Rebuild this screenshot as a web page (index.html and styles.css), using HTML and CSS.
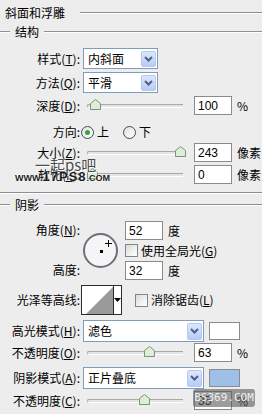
FILE: index.html
```html
<!DOCTYPE html>
<html lang="zh">
<head>
    <meta charset="UTF-8">
    <title>斜面和浮雕</title>
    <link rel="stylesheet" href="styles.css">
</head>
<body>
    <div class="title"><span>斜面和浮雕</span><i class="rule"></i></div>
    <div class="legend"><i class="rule stub"></i><span>结构</span><i class="rule"></i></div>

    <div class="row h21 mt10">
        <label class="lbl">样式(<u>T</u>):</label>
        <div class="select w75"><span>内斜面</span><b class="drop"><svg width="9" height="6" viewBox="0 0 9 6"><path d="M1 1 L4.5 4.5 L8 1" fill="none" stroke="#4d6185" stroke-width="2"/></svg></b></div>
    </div>
    <div class="row h21 mt3">
        <label class="lbl">方法(<u>Q</u>):</label>
        <div class="select w75"><span>平滑</span><b class="drop"><svg width="9" height="6" viewBox="0 0 9 6"><path d="M1 1 L4.5 4.5 L8 1" fill="none" stroke="#4d6185" stroke-width="2"/></svg></b></div>
    </div>
    <div class="row h19 mt3">
        <label class="lbl">深度(<u>D</u>):</label>
        <div class="slider"><i class="track"></i><svg class="thumb" style="left:7px" width="11" height="11" viewBox="0 0 11 11"><path d="M0.5 4.5 L5.5 0.5 L10.5 4.5 V10.5 H0.5 Z" fill="#dcefd6" stroke="#7d917b"/></svg></div>
        <div class="num">100</div><span class="unit">%</span>
    </div>
    <div class="row h16 mt9">
        <label class="lbl">方向:</label>
        <i class="radio on"></i><span class="opt">上</span>
        <i class="radio gap"></i><span class="opt">下</span>
    </div>
    <div class="row h19 mt3">
        <label class="lbl">大小(<u>Z</u>):</label>
        <div class="slider"><i class="track"></i><svg class="thumb" style="left:92px" width="11" height="11" viewBox="0 0 11 11"><path d="M0.5 4.5 L5.5 0.5 L10.5 4.5 V10.5 H0.5 Z" fill="#dcefd6" stroke="#7d917b"/></svg></div>
        <div class="num">243</div><span class="unit">像素</span>
    </div>
    <div class="row h19 mt3">
        <label class="lbl">软化(<u>F</u>):</label>
        <div class="slider"><i class="track"></i><svg class="thumb" style="left:4px" width="11" height="11" viewBox="0 0 11 11"><path d="M0.5 4.5 L5.5 0.5 L10.5 4.5 V10.5 H0.5 Z" fill="#dcefd6" stroke="#7d917b"/></svg></div>
        <div class="num">0</div><span class="unit">像素</span>
    </div>

    <div class="sep"></div>
    <div class="legend mt5"><i class="rule stub"></i><span>阴影</span><i class="rule"></i></div>

    <div class="angle mt10">
        <div class="angle-labels">
            <label class="lbl">角度(<u>N</u>):</label>
            <label class="lbl">高度:</label>
        </div>
        <div class="dial"><i class="dot"></i><i class="cross"></i></div>
        <div class="angle-ctrls">
            <div class="row h19"><div class="num">52</div><span class="unit">度</span></div>
            <div class="row h13"><i class="check"></i><span class="opt">使用全局光(<u>G</u>)</span></div>
            <div class="row h19"><div class="num">32</div><span class="unit">度</span></div>
        </div>
    </div>

    <div class="row h30 mt5">
        <label class="lbl">光泽等高线:</label>
        <div class="contour">
            <svg width="31" height="28" viewBox="0 0 31 28"><path d="M4 28 L31 1 V28 Z" fill="#9a9a9a"/></svg>
            <b class="contour-drop"><svg width="7" height="4" viewBox="0 0 7 4"><path d="M0 0 H7 L3.5 4 Z" fill="#000"/></svg></b>
        </div>
        <i class="check ml13"></i><span class="opt">消除锯齿(<u>L</u>)</span>
    </div>

    <div class="row h22 mt5">
        <label class="lbl">高光模式(<u>H</u>):</label>
        <div class="select w121"><span>滤色</span><b class="drop"><svg width="9" height="6" viewBox="0 0 9 6"><path d="M1 1 L4.5 4.5 L8 1" fill="none" stroke="#4d6185" stroke-width="2"/></svg></b></div>
        <i class="swatch white"></i>
    </div>
    <div class="row h19 mt1">
        <label class="lbl">不透明度(<u>O</u>):</label>
        <div class="slider"><i class="track"></i><svg class="thumb" style="left:61px" width="11" height="11" viewBox="0 0 11 11"><path d="M0.5 4.5 L5.5 0.5 L10.5 4.5 V10.5 H0.5 Z" fill="#dcefd6" stroke="#7d917b"/></svg></div>
        <div class="num">63</div><span class="unit">%</span>
    </div>
    <div class="row h22 mt5">
        <label class="lbl">阴影模式(<u>A</u>):</label>
        <div class="select w121"><span>正片叠底</span><b class="drop"><svg width="9" height="6" viewBox="0 0 9 6"><path d="M1 1 L4.5 4.5 L8 1" fill="none" stroke="#4d6185" stroke-width="2"/></svg></b></div>
        <i class="swatch blue"></i>
    </div>
    <div class="row h19 mt2">
        <label class="lbl">不透明度(<u>C</u>):</label>
        <div class="slider"><i class="track"></i><svg class="thumb" style="left:56px" width="11" height="11" viewBox="0 0 11 11"><path d="M0.5 4.5 L5.5 0.5 L10.5 4.5 V10.5 H0.5 Z" fill="#dcefd6" stroke="#7d917b"/></svg></div>
        <div class="num">35</div><span class="unit">%</span>
    </div>

    <!-- watermarks -->
    <div class="mark-cn">一起ps吧</div>
    <div class="mark-url"><small>WWW.</small><b>17PS8</b><small>.COM</small></div>
    <div class="mark-bs">BS369.COM</div>
</body>
</html>
```
FILE: styles.css
```css
body {
    margin: 0;
    width: 262px;
    height: 414px;
    overflow: hidden;
    position: relative;
    background-color: #ededed;
    font: 12px/14px "Noto Sans CJK SC", sans-serif;
    color: #000;
}
u {
    text-decoration: underline;
}
.title {
    display: flex;
    align-items: center;
    height: 26px;
}
.title span {
    margin-left: 5px;
}
.title .rule {
    margin-left: 15px;
}
.rule {
    flex: 1;
    height: 0;
    border-top: 1px solid #8e8e8e;
    border-bottom: 1px solid #fff;
}
.rule.stub {
    flex: none;
    width: 10px;
}
.legend {
    display: flex;
    align-items: center;
    height: 12px;
}
.legend span {
    margin: 0 5px;
}
.sep {
    margin-top: 8px;
    border-top: 1px solid #8e8e8e;
    border-bottom: 1px solid #fff;
}

.row {
    display: flex;
    align-items: center;
}
.h13 { height: 13px; }
.h16 { height: 16px; }
.h19 { height: 19px; }
.h21 { height: 21px; }
.h22 { height: 22px; }
.h30 { height: 30px; }
.mt1 { margin-top: 1px; }
.mt2 { margin-top: 2px; }
.mt3 { margin-top: 3px; }
.mt5 { margin-top: 5px; }
.mt9 { margin-top: 9px; }
.mt10 { margin-top: 10px; }

.lbl {
    flex: none;
    width: 80px;
    text-align: right;
    white-space: nowrap;
}

.select {
    display: flex;
    align-items: center;
    height: 100%;
    margin-left: 3px;
    box-sizing: border-box;
    border: 1px solid #7f9db9;
    background: #fff;
}
.w75 { width: 75px; }
.w121 { width: 121px; }
.select span {
    flex: 1;
    padding-left: 4px;
}
.drop {
    display: flex;
    align-items: center;
    justify-content: center;
    width: 15px;
    height: calc(100% - 3px);
    margin-right: 1px;
    box-sizing: border-box;
    border: 1px solid #b4c8f2;
    border-radius: 2px;
    background: linear-gradient(#dde7fd, #b8cbf5);
}

.slider {
    position: relative;
    flex: none;
    width: 100px;
    height: 100%;
    margin-left: 3px;
    margin-right: 11px;
}
.track {
    position: absolute;
    left: 4px;
    right: 0;
    top: 50%;
    height: 4px;
    margin-top: -2px;
    box-sizing: border-box;
    border: 1px solid #a9a9a9;
    border-right: none;
    border-bottom-color: #fff;
    border-radius: 2px 0 0 2px;
    background: #e4e4e4;
}
.thumb {
    position: absolute;
    top: 50%;
    margin-top: -7px;
}

.num {
    flex: none;
    width: 38px;
    height: 19px;
    box-sizing: border-box;
    padding: 2px 0 0 3px;
    border: 1px solid #8b8b8b;
    background: #fff;
    font: 12px/14px "Liberation Sans", Arial, sans-serif;
}
.unit {
    margin-left: 5px;
}

.radio {
    flex: none;
    position: relative;
    width: 13px;
    height: 13px;
    margin-left: 1px;
    box-sizing: border-box;
    border: 1px solid #414b58;
    border-radius: 50%;
    background: linear-gradient(135deg, #e0e0dc, #fff);
}
.radio.on::after {
    content: "";
    position: absolute;
    left: 3px;
    top: 3px;
    width: 5px;
    height: 5px;
    border-radius: 50%;
    background: #3aa13a;
}
.radio.gap {
    margin-left: 14px;
}
.opt {
    margin-left: 3px;
    white-space: nowrap;
}

.check {
    flex: none;
    width: 13px;
    height: 13px;
    box-sizing: border-box;
    border: 1px solid #7a8694;
    background: linear-gradient(135deg, #dcdcd6, #fff);
}
.ml13 {
    margin-left: 13px;
}

.angle {
    display: flex;
    height: 59px;
}
.angle-labels {
    display: flex;
    flex-direction: column;
    justify-content: space-between;
    padding: 2px 0 3px;
}
.dial {
    position: relative;
    flex: none;
    align-self: center;
    width: 35px;
    height: 35px;
    margin-left: 3px;
    box-sizing: border-box;
    border: 2px solid #6f6f7c;
    border-radius: 50%;
    background: #f5f5f5;
}
.dot {
    position: absolute;
    left: 15px;
    top: 15px;
    width: 3px;
    height: 3px;
    background: #000;
}
.cross {
    position: absolute;
    left: 20px;
    top: 5px;
    width: 7px;
    height: 7px;
    background: linear-gradient(#000, #000) center / 1px 7px no-repeat,
                linear-gradient(#000, #000) center / 7px 1px no-repeat;
}
.angle-ctrls {
    display: flex;
    flex-direction: column;
    justify-content: space-between;
    margin-left: 7px;
}

.contour {
    display: flex;
    flex: none;
    width: 41px;
    height: 30px;
    margin-left: 1px;
    box-sizing: border-box;
    border: 1px solid #2b2b2b;
    background: #fff;
}
.contour svg {
    display: block;
}
.contour-drop {
    display: flex;
    align-items: center;
    justify-content: center;
    flex: 1;
    border-left: 1px solid #2b2b2b;
}

.swatch {
    flex: none;
    width: 31px;
    height: 18px;
    margin-left: 5px;
    box-sizing: border-box;
    border: 1px solid #8b8b8b;
}
.swatch.white { background: #fff; }
.swatch.blue { background: #9fc0e6; }

.mark-cn {
    position: absolute;
    left: 35px;
    top: 156px;
    font-size: 15px;
    line-height: 17px;
    color: #4a4a4a;
    text-shadow: 0 0 1px #fff, 1px 1px 0 #fff;
}
.mark-url {
    position: absolute;
    left: 15px;
    top: 171px;
    font: bold 11px/12px "Liberation Sans", Arial, sans-serif;
    color: #1d1d1d;
    text-shadow: 0 0 2px #fff;
    white-space: nowrap;
}
.mark-url small {
    font-size: 9px;
}
.mark-url b {
    font-size: 13px;
    letter-spacing: 1px;
}
.mark-bs {
    position: absolute;
    left: 193px;
    top: 389px;
    width: 62px;
    height: 18px;
    border-radius: 3px;
    background: rgba(90, 90, 90, 0.6);
    color: #eee;
    font: 11px/18px "DejaVu Sans Mono", monospace;
    text-align: center;
    letter-spacing: 0;
}
```
